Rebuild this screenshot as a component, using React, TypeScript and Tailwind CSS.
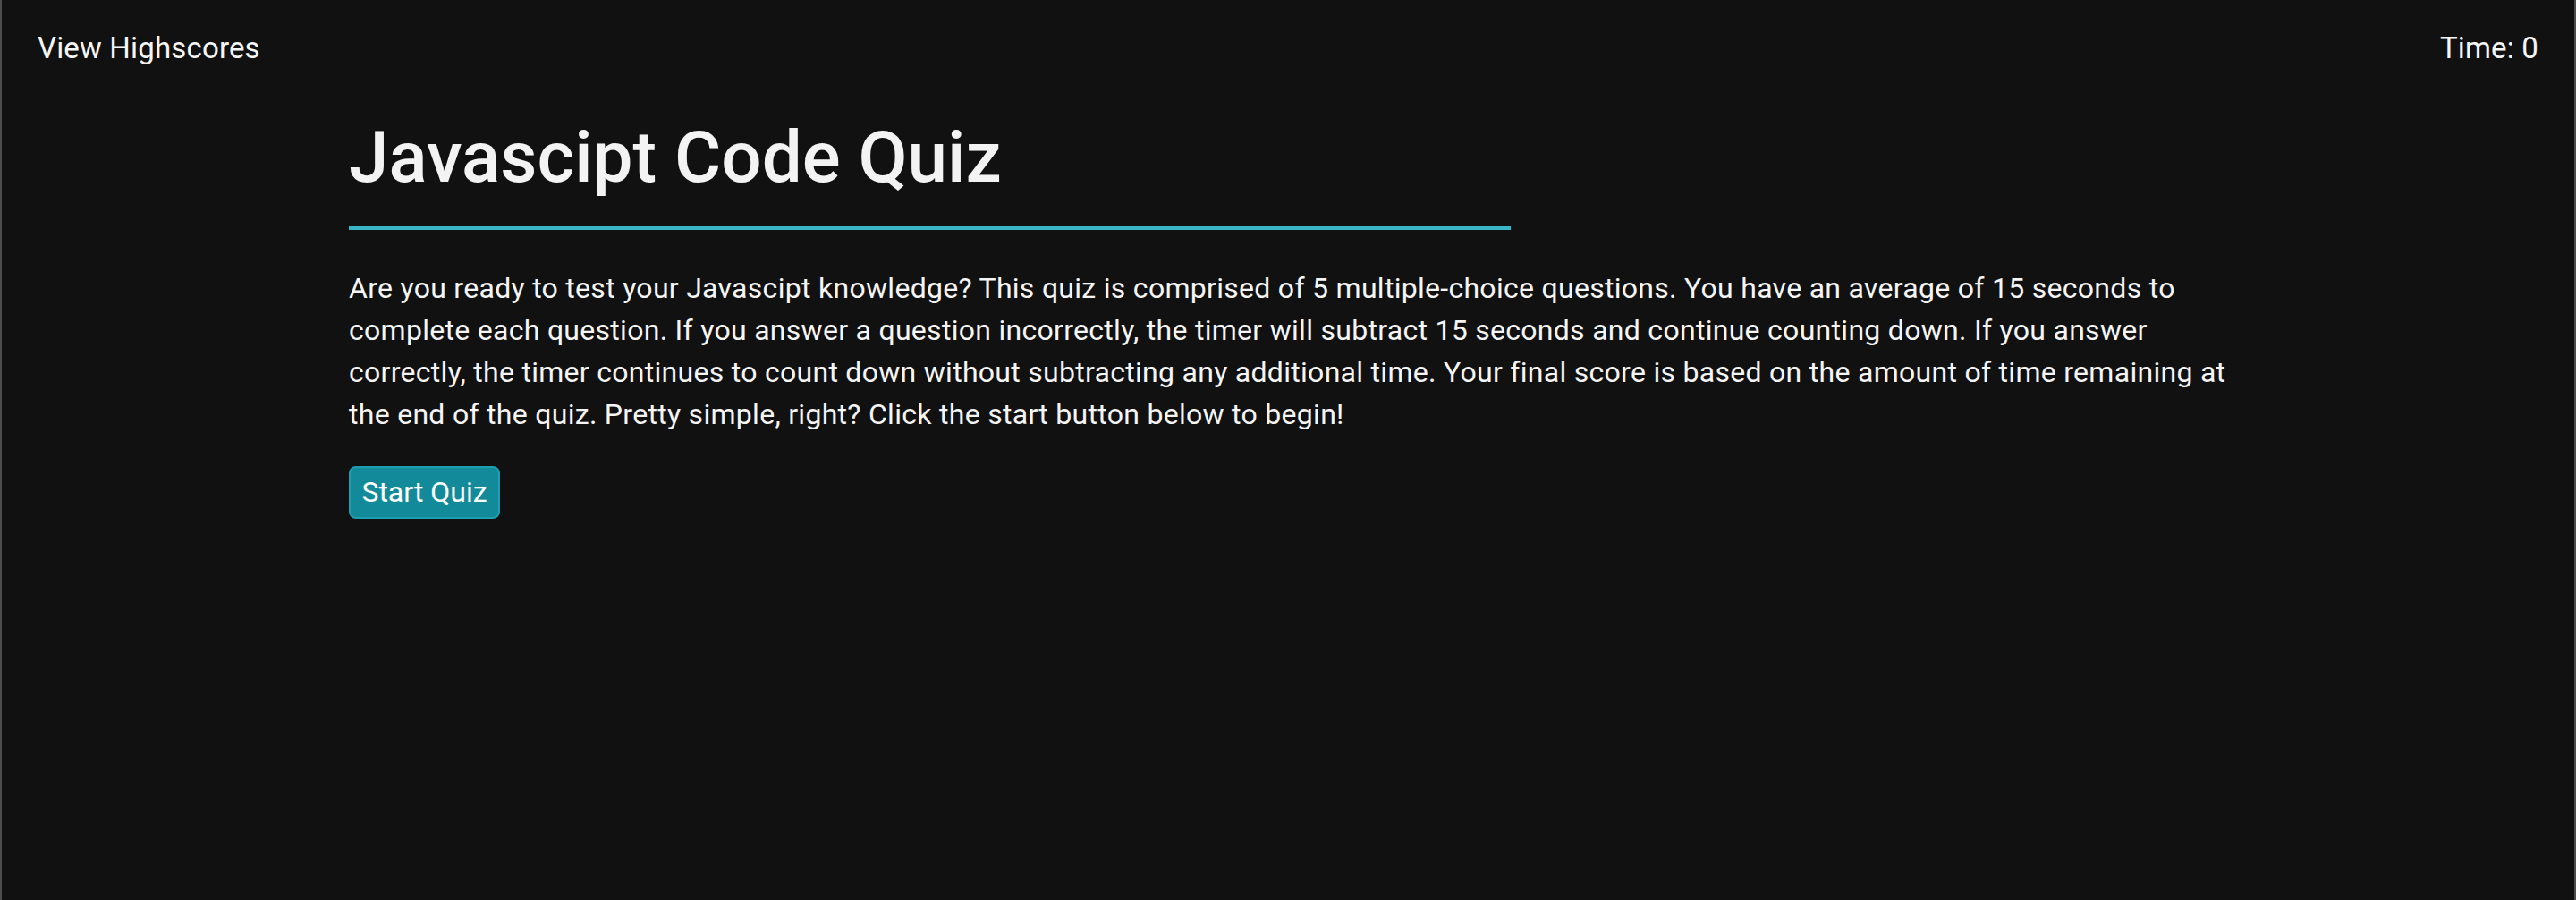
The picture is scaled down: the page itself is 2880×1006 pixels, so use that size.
import React from 'react';

const Header = () => (
  <header className="flex items-start justify-between px-[40px] pt-[29px] text-[33px] leading-[1.5] tracking-[0.005em]">
    <a href="#" className="text-[#f5f5f5]">View Highscores</a>
    <span className="text-[#f5f5f5]">Time: 0</span>
  </header>
);

const Intro = () => (
  <main className="mx-auto w-[2100px]">
    {/* Title with accent underline */}
    <div className="w-[1299px] border-b-4 border-[#38b6c7] pb-[29px]">
      <h1 className="text-[80px] leading-[96px] font-medium text-[#f3f3f3]">Javascipt Code Quiz</h1>
    </div>

    <p className="mt-[42px] text-[32px] leading-[47px] tracking-[0.009em] text-[#f5f5f5]">
      Are you ready to test your Javascipt knowledge? This quiz is comprised of 5 multiple-choice questions. You
      have an average of 15 seconds to complete each question. If you answer a question incorrectly, the timer
      will subtract 15 seconds and continue counting down. If you answer correctly, the timer continues to count
      down without subtracting any additional time. Your final score is based on the amount of time remaining at
      the end of the quiz. Pretty simple, right? Click the start button below to begin!
    </p>

    <button className="mt-[34px] flex h-[59px] w-[169px] items-center justify-center rounded-[8px] border-2 border-[#1c9fb1] bg-[#138a99] text-[32px] leading-none text-white">
      Start Quiz
    </button>
  </main>
);

export default function App() {
  return (
    <div className="min-h-screen border-x-2 border-x-[#4d4d4d] bg-[#111111] font-['Roboto',sans-serif] antialiased">
      <Header />
      <div className="mt-[49px]">
        <Intro />
      </div>
    </div>
  );
}
